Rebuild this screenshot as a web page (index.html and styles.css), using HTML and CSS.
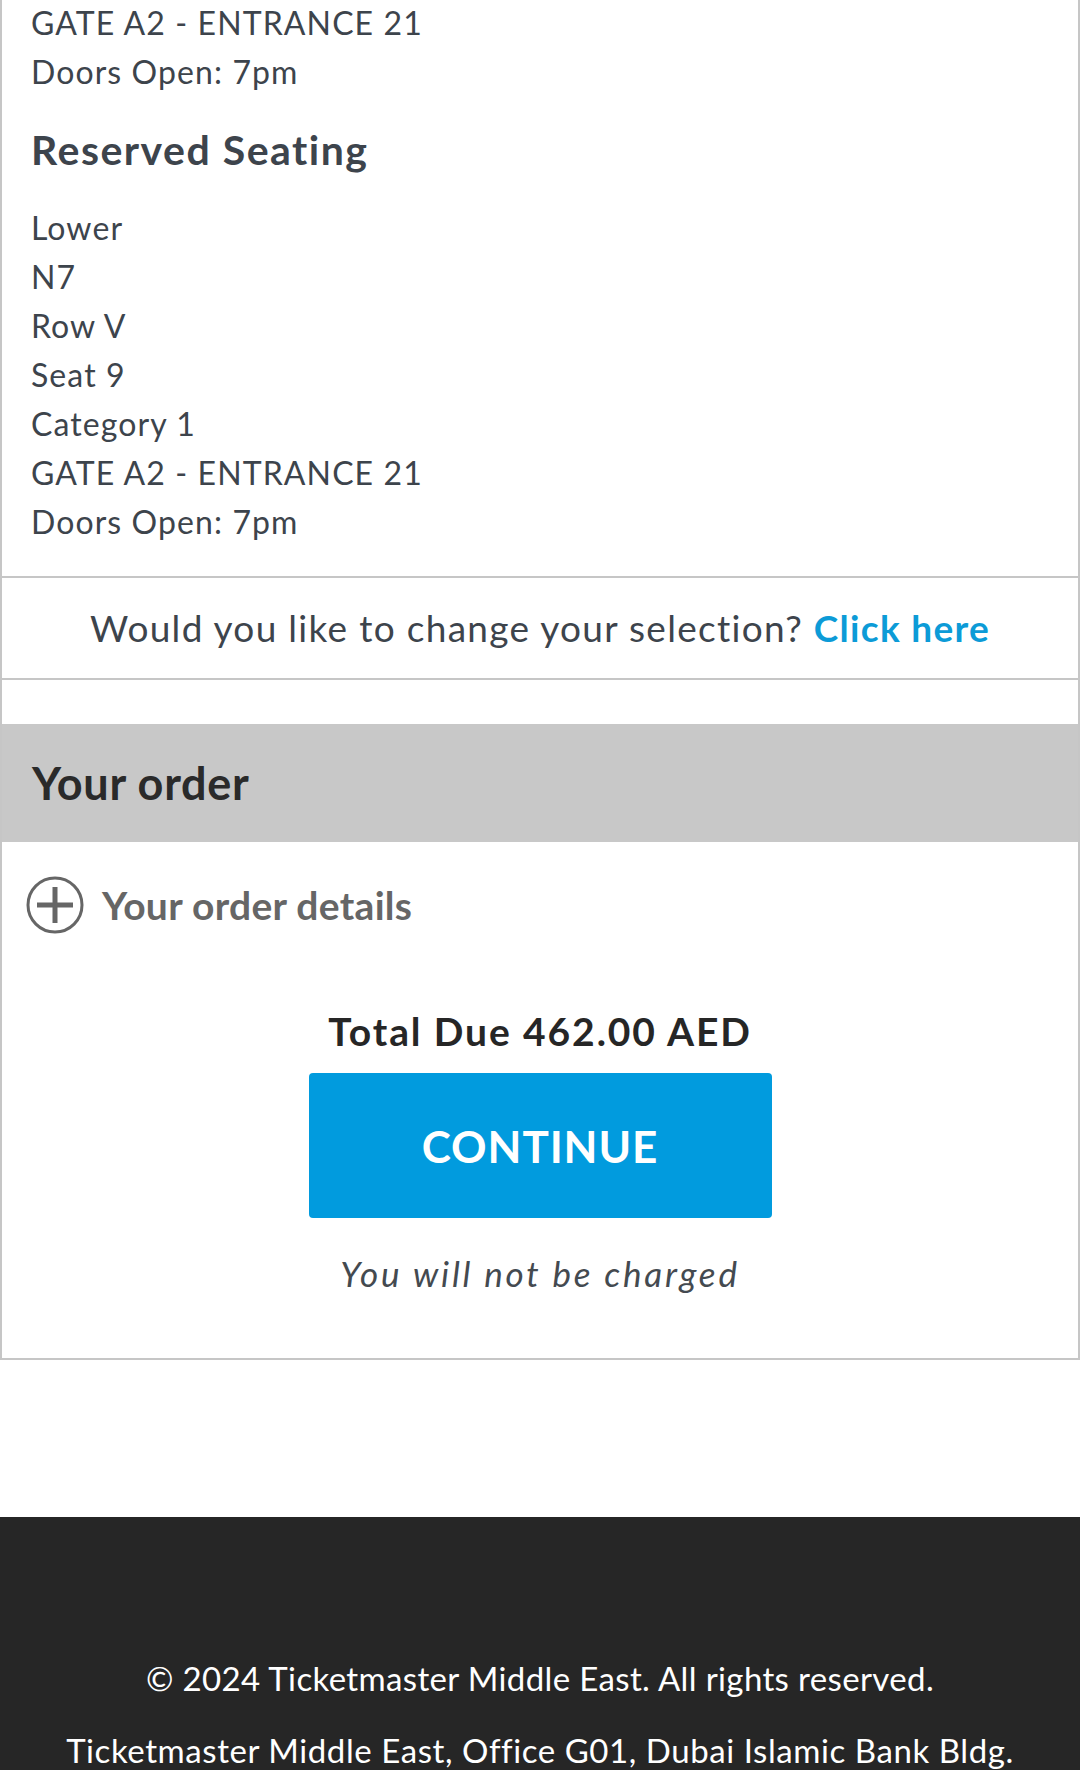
FILE: index.html
```html
<!DOCTYPE html>
<html lang="en">
<head>
<meta charset="utf-8">
<title>Ticketmaster – Your order</title>
<link rel="stylesheet" href="styles.css">
</head>
<body>
<main class="panel">
  <section class="seating">
    <p class="line">GATE A2 - ENTRANCE 21</p>
    <p class="line">Doors Open: 7pm</p>
    <h2 class="seat-title">Reserved Seating</h2>
    <p class="line">Lower</p>
    <p class="line">N7</p>
    <p class="line">Row V</p>
    <p class="line">Seat 9</p>
    <p class="line">Category 1</p>
    <p class="line">GATE A2 - ENTRANCE 21</p>
    <p class="line">Doors Open: 7pm</p>
  </section>
  <section class="change">
    <p class="change-text">Would you like to change your selection? <a class="change-link" href="#">Click here</a></p>
  </section>
  <section class="order">
    <h2 class="order-head">Your order</h2>
    <div class="order-details">
      <svg class="plus" width="58" height="58" viewBox="0 0 58 58" aria-hidden="true">
        <circle cx="29" cy="29" r="27" fill="none" stroke="#666" stroke-width="3"/>
        <rect x="11" y="26.5" width="36" height="5" fill="#666"/>
        <rect x="26.5" y="11" width="5" height="36" fill="#666"/>
      </svg>
      <span class="details-text">Your order details</span>
    </div>
    <div class="checkout">
      <p class="total">Total Due 462.00 AED</p>
      <button class="continue" type="button">CONTINUE</button>
      <p class="note">You will not be charged</p>
    </div>
  </section>
</main>
<footer class="footer">
  <p class="foot-line">© 2024 Ticketmaster Middle East. All rights reserved.</p>
  <p class="foot-line">Ticketmaster Middle East, Office G01, Dubai Islamic Bank Bldg.</p>
</footer>
</body>
</html>
```

FILE: styles.css
```css
* { box-sizing: border-box; }

html, body {
  margin: 0;
  padding: 0;
  background: #ffffff;
}

body {
  font-family: "Lato", "Open Sans", "Liberation Sans", sans-serif;
  color: #3d444c;
}

p, h2 { margin: 0; }

.panel {
  border-left: 2px solid #c6c6c6;
  border-right: 2px solid #c6c6c6;
  border-bottom: 2px solid #c6c6c6;
}

.seating {
  padding: 0 0 30px 29px;
  margin-top: -2px;
  border-bottom: 2px solid #c6c6c6;
}

.line {
  font-size: 32px;
  line-height: 49px;
  letter-spacing: 1.1px;
  color: #3d444c;
}

.seat-title {
  font-size: 41px;
  line-height: 48px;
  font-weight: 700;
  letter-spacing: 1.5px;
  color: #3d444c;
  margin: 30px 0 29px;
}

.change {
  height: 102px;
  border-bottom: 2px solid #c6c6c6;
  display: flex;
  align-items: center;
  justify-content: center;
}

.change-text {
  font-size: 37px;
  line-height: 44px;
  letter-spacing: 1.3px;
  color: #3d444c;
}

.change-link {
  color: #0c9bd7;
  font-weight: 700;
  text-decoration: none;
}

.order {
  padding-top: 44px;
}

.order-head {
  height: 118px;
  background: #c8c8c8;
  display: flex;
  align-items: center;
  padding-left: 30px;
  font-size: 45px;
  line-height: 54px;
  font-weight: 700;
  letter-spacing: 0.7px;
  color: #2a2a2a;
}

.order-details {
  display: flex;
  align-items: center;
  gap: 18px;
  padding: 34px 0 1px 24px;
}

.plus { display: block; flex: none; }

.details-text {
  font-size: 39px;
  line-height: 48px;
  font-weight: 700;
  letter-spacing: 0.3px;
  color: #666666;
}

.checkout {
  display: flex;
  flex-direction: column;
  align-items: center;
  padding: 72px 0 63px;
}

.total {
  font-size: 39px;
  line-height: 48px;
  font-weight: 700;
  letter-spacing: 1.9px;
  color: #262626;
}

.continue {
  margin-top: 18px;
  width: 463px;
  height: 145px;
  border: 0;
  border-radius: 4px;
  background: #019bde;
  color: #ffffff;
  font-family: inherit;
  font-size: 44px;
  font-weight: 700;
  letter-spacing: 0.9px;
}

.note {
  margin-top: 33px;
  font-size: 35px;
  line-height: 44px;
  font-style: italic;
  letter-spacing: 2.8px;
  color: #444a50;
}

.footer {
  margin-top: 157px;
  background: #262626;
  color: #ffffff;
  padding-top: 141px;
  text-align: center;
}

.foot-line {
  font-size: 33px;
  line-height: 40px;
  margin-bottom: 32px;
}

.foot-line:first-child { letter-spacing: 0.36px; }
.foot-line:last-child { letter-spacing: 0.57px; }
```
